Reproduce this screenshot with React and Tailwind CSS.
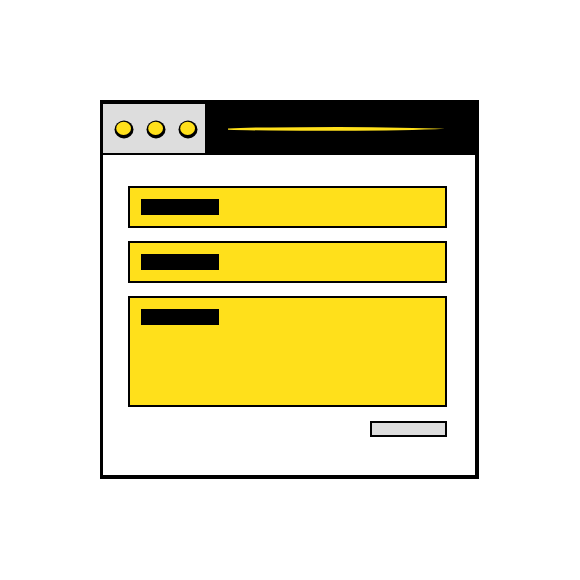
const Dot = () => (
  <svg width="20" height="20" viewBox="0 0 20 20">
    <ellipse cx="10" cy="10.5" rx="9.5" ry="9" fill="#000" />
    <ellipse cx="9.6" cy="9.4" rx="7.4" ry="6.6" fill="#FFE01B" />
  </svg>
);

const Field = ({ tall }) => (
  <div
    className={
      "border-2 border-black bg-[#FFE01B] px-[11px] pt-[11px] " +
      (tall ? "h-[111px]" : "h-[42px]")
    }
  >
    <div className="h-[16px] w-[78px] bg-black"></div>
  </div>
);

export default function App() {
  return (
    <div className="w-[580px] h-[580px] bg-white pt-[100px] pl-[100px]">
      <div className="w-[379px] h-[379px] border-[4px] border-black border-l-[3px] bg-white flex flex-col">
        <div className="h-[51px] bg-black flex items-stretch pb-[2px]">
          <div className="w-[102px] bg-[#DDDDDD] flex items-center gap-[12px] pl-[11px]">
            <Dot />
            <Dot />
            <Dot />
          </div>
          <div className="flex-1 flex items-center pl-[23px]">
            <svg width="217" height="6" viewBox="0 0 217 6">
              <path d="M0 2.4 Q30 1 110 0.9 Q180 1.2 217 2.8 Q180 4.6 110 4.8 Q30 4.8 0 3.8 Z" fill="#FFE01B" />
            </svg>
          </div>
        </div>
        <div className="flex flex-col gap-[13px] pl-[25px] pr-[28px] pt-[31px]">
          <Field />
          <Field />
          <Field tall />
          <div className="flex justify-end pt-[1px]">
            <div className="w-[77px] h-[16px] border-2 border-black bg-[#DDDDDD]"></div>
          </div>
        </div>
      </div>
    </div>
  );
}
